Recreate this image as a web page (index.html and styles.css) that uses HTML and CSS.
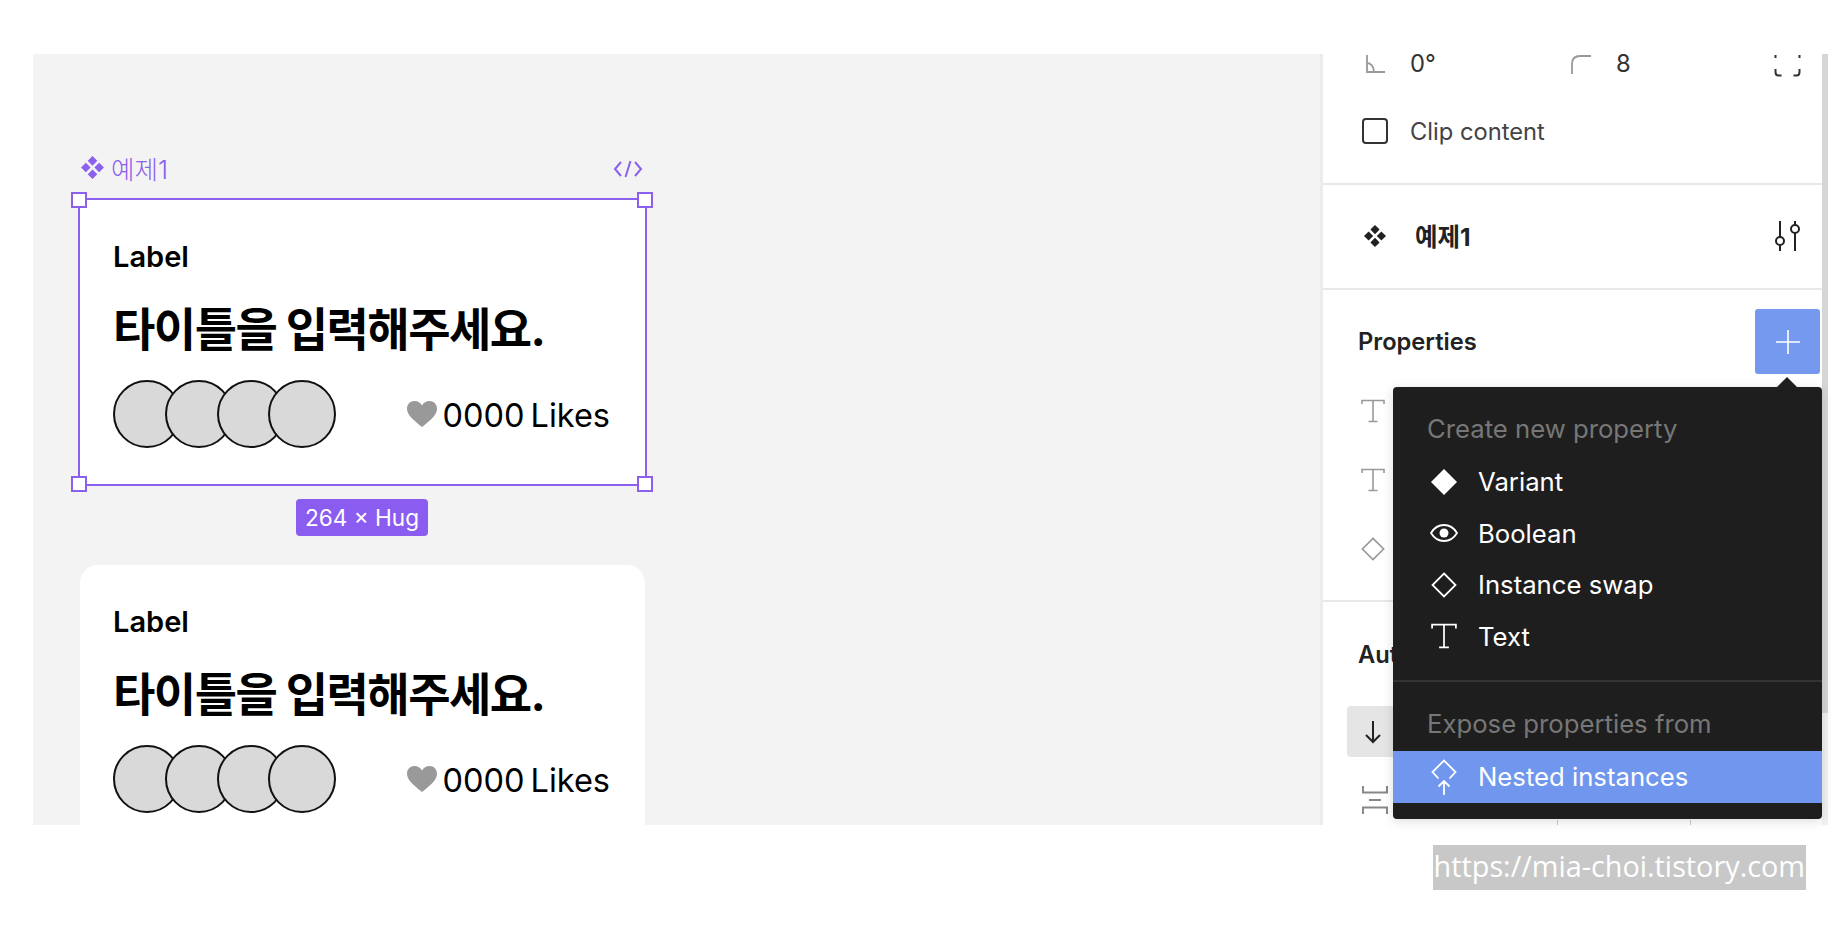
FILE: index.html
```html
<!DOCTYPE html>
<html lang="ko">
<head>
    <meta charset="UTF-8">
    <title>예제1</title>
    <link rel="stylesheet" href="styles.css">
</head>
<body>
    <svg class="defs" width="0" height="0">
        <symbol id="comp" viewBox="0 0 24 24">
            <path d="M12 1l4.600 4.600-4.600 4.600-4.600-4.600zM12 13.800l4.600 4.600-4.600 4.600-4.600-4.600zM5.600 7.400l4.600 4.600-4.600 4.600L1 12zM18.400 7.400L23 12l-4.600 4.600-4.600-4.600z"/>
        </symbol>
        <symbol id="heart" viewBox="0 0 30 26">
            <path d="M15 26C5 18 0 13.500 0 7.500 0 3 3.400 0 7.500 0 10.700 0 13.500 1.700 15 4.500 16.500 1.700 19.300 0 22.500 0 26.600 0 30 3 30 7.500 30 13.500 25 18 15 26z"/>
        </symbol>
        <symbol id="type" viewBox="0 0 24 24">
            <path d="M1 5V1.500h22V5M12 1.500v21M7.500 22.500h9" fill="none" stroke="currentColor" stroke-width="1.600"/>
        </symbol>
        <symbol id="diamond" viewBox="0 0 26 26">
            <path d="M13 1.500L24.500 13 13 24.500 1.500 13z" fill="none" stroke="currentColor" stroke-width="1.800"/>
        </symbol>
    </svg>

    <div class="app">
        <main class="canvas">
            <div class="frame-head">
                <span class="frame-name">
                    <svg class="frame-icon"><use href="#comp"/></svg>예제1
                </span>
                <svg class="code-icon" viewBox="0 0 30 18"><path d="M8 2L2 9l6 7M22 2l6 7-6 7M17.500 1l-5 16" fill="none" stroke="#8b60ee" stroke-width="2"/></svg>
            </div>

            <section class="card card-selected">
                <span class="handle handle-tl"></span>
                <span class="handle handle-tr"></span>
                <span class="handle handle-bl"></span>
                <span class="handle handle-br"></span>
                <span class="size-badge">264 × Hug</span>
                <h3 class="card-label">Label</h3>
                <h2 class="card-title">타이틀을 입력해주세요.</h2>
                <div class="card-foot">
                    <div class="avatars"><i></i><i></i><i></i><i></i></div>
                    <div class="likes"><svg class="heart"><use href="#heart"/></svg>0000 Likes</div>
                </div>
            </section>

            <section class="card card-plain">
                <h3 class="card-label">Label</h3>
                <h2 class="card-title">타이틀을 입력해주세요.</h2>
                <div class="card-foot">
                    <div class="avatars"><i></i><i></i><i></i><i></i></div>
                    <div class="likes"><svg class="heart"><use href="#heart"/></svg>0000 Likes</div>
                </div>
            </section>
        </main>

        <aside class="panel">
            <span class="scroll-thumb"></span>

            <div class="section section-frame">
                <div class="value-row">
                    <div class="field field-angle">
                        <svg class="angle-icon" viewBox="0 0 19 18"><path d="M1 0v17h18M1 8c4 0 7 4 7 9" fill="none" stroke="#999" stroke-width="1.800"/></svg>
                        <span>0°</span>
                    </div>
                    <div class="field field-radius">
                        <svg class="radius-icon" viewBox="0 0 20 19"><path d="M1 19V9c0-5 3-8 8-8h11" fill="none" stroke="#999" stroke-width="1.800"/></svg>
                        <span>8</span>
                    </div>
                    <svg class="corners-icon" viewBox="0 0 27 22"><path d="M1.500 0v3M25.500 0v3M1.500 14v3c0 2 1 3.500 3 3.500h3M25.500 14v3c0 2-1 3.500-3 3.500h-3" fill="none" stroke="#333" stroke-width="2"/></svg>
                </div>
                <label class="clip-row"><span class="checkbox"></span>Clip content</label>
            </div>

            <div class="section section-comp">
                <svg class="comp-icon"><use href="#comp"/></svg>
                <strong class="comp-name">예제1</strong>
                <svg class="tune-icon" viewBox="0 0 27 30"><path d="M6 0v16M6 24v6M21 0v4M21 12v18" fill="none" stroke="#222" stroke-width="2"/><circle cx="6" cy="20" r="4" fill="none" stroke="#222" stroke-width="2"/><circle cx="21" cy="8" r="4" fill="none" stroke="#222" stroke-width="2"/></svg>
            </div>

            <div class="section section-props">
                <div class="props-head">
                    <span class="section-title">Properties</span>
                    <span class="add-btn"><svg class="plus-icon" viewBox="0 0 24 24"><path d="M12 0v24M0 12h24" stroke="#fff" stroke-width="1.600"/></svg></span>
                </div>
                <div class="prop-row"><svg class="prop-icon"><use href="#type"/></svg></div>
                <div class="prop-row"><svg class="prop-icon"><use href="#type"/></svg></div>
                <div class="prop-row"><svg class="prop-icon"><use href="#diamond"/></svg></div>
            </div>

            <div class="section-auto">
                <span class="section-title">Aut</span>
                <div class="dir-btn">
                    <svg class="arrow-icon" viewBox="0 0 16 24"><path d="M8 1v21M1 15l7 7 7-7" fill="none" stroke="#222" stroke-width="2"/></svg>
                </div>
                <svg class="gap-icon" viewBox="0 0 26 28"><path d="M1 0v6.500h24V0M7 14h12M1 28v-6.500h24V28" fill="none" stroke="#888" stroke-width="2"/></svg>
                <div class="gap-fields"><span></span><span></span></div>
            </div>

            <div class="menu">
                <div class="menu-title">Create new property</div>
                <div class="menu-item">
                    <svg class="menu-icon" viewBox="0 0 26 26"><path d="M13 0l13 13-13 13L0 13z" fill="#fff"/></svg>Variant
                </div>
                <div class="menu-item">
                    <svg class="menu-icon" viewBox="0 0 28 18"><path d="M1 9c3-5 8-8 13-8s10 3 13 8c-3 5-8 8-13 8S4 14 1 9z" fill="none" stroke="#fff" stroke-width="1.800"/><circle cx="14" cy="9" r="4.500" fill="#fff"/></svg>Boolean
                </div>
                <div class="menu-item">
                    <svg class="menu-icon"><use href="#diamond"/></svg>Instance swap
                </div>
                <div class="menu-item">
                    <svg class="menu-icon"><use href="#type"/></svg>Text
                </div>
                <div class="menu-line"></div>
                <div class="menu-title menu-title-second">Expose properties from</div>
                <div class="menu-item menu-item-active">
                    <svg class="menu-icon menu-icon-tall" viewBox="0 0 26 36"><path d="M7.500 19.500L1.500 13 13 1.500 24.500 13l-6 6.500M13 36V22M7.500 27.500L13 22l5.500 5.500" fill="none" stroke="#fff" stroke-width="1.800"/></svg>Nested instances
                </div>
            </div>
        </aside>
    </div>

    <footer class="watermark-bar">
        <span class="watermark">https://mia-choi.tistory.com</span>
    </footer>
</body>
</html>
```

FILE: styles.css
```css
* {
    box-sizing: border-box;
}

body {
    margin: 0;
    background-color: #fff;
    font-family: Inter, "Noto Sans CJK KR", sans-serif;
    color: #000;
}

.defs {
    position: absolute;
}

.app {
    display: flex;
    width: 1795px;
    height: 771px;
    margin: 54px 0 0 33px;
}

/* canvas */
.canvas {
    width: 1287px;
    height: 771px;
    padding: 0 0 0 45px;
    overflow: hidden;
    background-color: #f3f3f3;
}

.frame-head {
    display: flex;
    justify-content: space-between;
    align-items: center;
    width: 569px;
    height: 32px;
    margin-top: 98px;
    padding: 0 4px 0 2px;
    color: #8b60ee;
}

.frame-name {
    display: flex;
    align-items: center;
    gap: 6px;
    margin-top: -1px;
    font-size: 25.500px;
    font-weight: 300;
}

.frame-icon {
    width: 25px;
    height: 25px;
    fill: #8b60ee;
}

.code-icon {
    width: 30px;
    height: 18px;
    margin-top: 2px;
}

.card {
    position: relative;
    width: 569px;
    height: 288px;
    padding: 41px 35px 0 33px;
    background-color: #fff;
    background-clip: padding-box;
    border: 2px solid transparent;
}

.card-selected {
    margin-top: 14px;
    border-color: #8b60ee;
}

.card-plain {
    margin-top: 77px;
    border-radius: 20px;
}

.handle {
    position: absolute;
    width: 16px;
    height: 16px;
    background-color: #fff;
    border: 2px solid #8b60ee;
}

.handle-tl { left: -9px; top: -8px; }
.handle-tr { right: -8px; top: -8px; }
.handle-bl { left: -9px; bottom: -8px; }
.handle-br { right: -8px; bottom: -8px; }

.size-badge {
    position: absolute;
    left: 216px;
    bottom: -52px;
    width: 132px;
    height: 37px;
    line-height: 37px;
    text-align: center;
    font-size: 22.600px;
    color: #fff;
    background-color: #8b5cf0;
    border-radius: 4px;
}

.card-label {
    margin: 0;
    height: 32px;
    line-height: 32px;
    font-size: 29px;
    font-weight: 600;
}

.card-title {
    margin: 26px 0 0;
    height: 60px;
    line-height: 60px;
    font-size: 46px;
    font-weight: 700;
    letter-spacing: -1.500px;
    white-space: nowrap;
}

.card-foot {
    display: flex;
    justify-content: space-between;
    align-items: center;
    margin-top: 21px;
}

.avatars {
    display: flex;
}

.avatars i {
    width: 68px;
    height: 68px;
    margin-right: -16.200px;
    background-color: #d9d9d9;
    border: 2px solid #111;
    border-radius: 50%;
}

.likes {
    display: flex;
    align-items: center;
    gap: 5px;
    padding-top: 2px;
    font-size: 32.500px;
    word-spacing: -3px;
}

.heart {
    width: 30px;
    height: 26px;
    margin-top: -2px;
    fill: #999;
}

/* panel */
.panel {
    position: relative;
    width: 508px;
    height: 771px;
    background-color: #fff;
    border-left: 3px solid #ececec;
    border-right: 6px solid #f2f2f2;
}

.scroll-thumb {
    position: absolute;
    top: 0;
    right: -6px;
    width: 6px;
    height: 659px;
    background-color: #d6d6d6;
}

.section {
    border-bottom: 2px solid #e8e8e8;
}

.section-frame {
    display: flow-root;
    height: 131px;
    padding-left: 39px;
}

.value-row {
    display: flex;
    align-items: center;
    height: 18px;
    line-height: 18px;
    margin-top: 1px;
    padding-right: 21px;
    font-size: 23.700px;
    color: #333;
}

.field {
    display: flex;
    align-items: center;
}

.field-angle {
    width: 209px;
}

.angle-icon {
    width: 19px;
    height: 18px;
    margin: 0 25px 0 4px;
}

.radius-icon {
    width: 20px;
    height: 19px;
    margin: 0 25px 0 0;
}

.corners-icon {
    width: 27px;
    height: 22px;
    margin: 3px 0 0 auto;
}

.clip-row {
    display: flex;
    align-items: center;
    gap: 22px;
    height: 40px;
    margin-top: 38px;
    font-size: 23.700px;
    color: #444;
}

.checkbox {
    width: 26px;
    height: 26px;
    border: 2px solid #333;
    border-radius: 4px;
}

.section-comp {
    display: flex;
    align-items: center;
    height: 105px;
    padding: 0 21px 2px 40px;
}

.comp-icon {
    width: 24px;
    height: 24px;
    fill: #222;
}

.comp-name {
    margin-left: 28px;
    font-size: 24.500px;
    color: #222;
}

.tune-icon {
    width: 27px;
    height: 30px;
    margin-left: auto;
}

.section-props {
    height: 312px;
    padding: 19px 2px 0 35px;
}

.props-head {
    display: flex;
    justify-content: space-between;
    align-items: center;
    height: 65px;
    margin-bottom: 2px;
}

.section-title {
    font-size: 23.700px;
    font-weight: 600;
    color: #222;
}

.add-btn {
    display: flex;
    align-items: center;
    justify-content: center;
    width: 65px;
    height: 65px;
    background-color: #7599ee;
    border-radius: 3px;
}

.plus-icon {
    width: 24px;
    height: 24px;
}

.prop-row {
    display: flex;
    align-items: center;
    height: 69px;
    padding-left: 3px;
    color: #999;
}

.prop-icon {
    width: 24px;
    height: 24px;
}

.section-auto {
    padding: 38px 0 0 35px;
}

.section-auto .section-title {
    display: block;
    height: 30px;
    line-height: 30px;
}

.dir-btn {
    display: flex;
    align-items: center;
    width: 103px;
    height: 51px;
    margin: 36px 0 0 -11px;
    padding-left: 18px;
    background-color: #e5e5e5;
    border-radius: 4px;
}

.arrow-icon {
    width: 16px;
    height: 24px;
}

.gap-icon {
    display: block;
    width: 26px;
    height: 28px;
    margin: 29px 0 0 4px;
}

.gap-fields {
    display: flex;
    height: 5px;
    margin: 6px 0 0 199px;
}

.gap-fields span {
    width: 135px;
    border-left: 1px solid #ccc;
}

/* dropdown */
.menu {
    position: absolute;
    left: 70px;
    top: 333px;
    width: 429px;
    height: 432px;
    padding-top: 22px;
    color: #fff;
    font-size: 25.700px;
    background-color: #1e1e1e;
    border-radius: 4px;
    box-shadow: 0 2px 12px rgba(0, 0, 0, 0.14);
}

.menu::before {
    content: "";
    position: absolute;
    left: 384px;
    top: -10px;
    border-left: 10px solid transparent;
    border-right: 10px solid transparent;
    border-bottom: 10px solid #1e1e1e;
}

.menu-title {
    height: 40px;
    line-height: 40px;
    margin-bottom: 7px;
    padding-left: 34px;
    color: #777;
}

.menu-title-second {
    margin-top: 22px;
}

.menu-item {
    display: flex;
    align-items: center;
    height: 51.500px;
    padding-left: 34px;
}

.menu-item-active {
    background-color: #7096ee;
}

.menu-icon {
    width: 28px;
    height: 26px;
    margin-right: 20px;
    margin-left: 3px;
}

.menu-icon-tall {
    height: 36px;
}

.menu-line {
    height: 2px;
    margin-top: 18px;
    background-color: #333;
}

/* watermark */
.watermark-bar {
    display: flex;
    justify-content: flex-end;
    padding: 20px 40px 0 0;
}

.watermark {
    height: 45px;
    line-height: 42px;
    padding: 0 1px;
    font-family: "Open Sans", sans-serif;
    font-size: 28.800px;
    color: #fff;
    background-color: #c8c8c8;
}
```
